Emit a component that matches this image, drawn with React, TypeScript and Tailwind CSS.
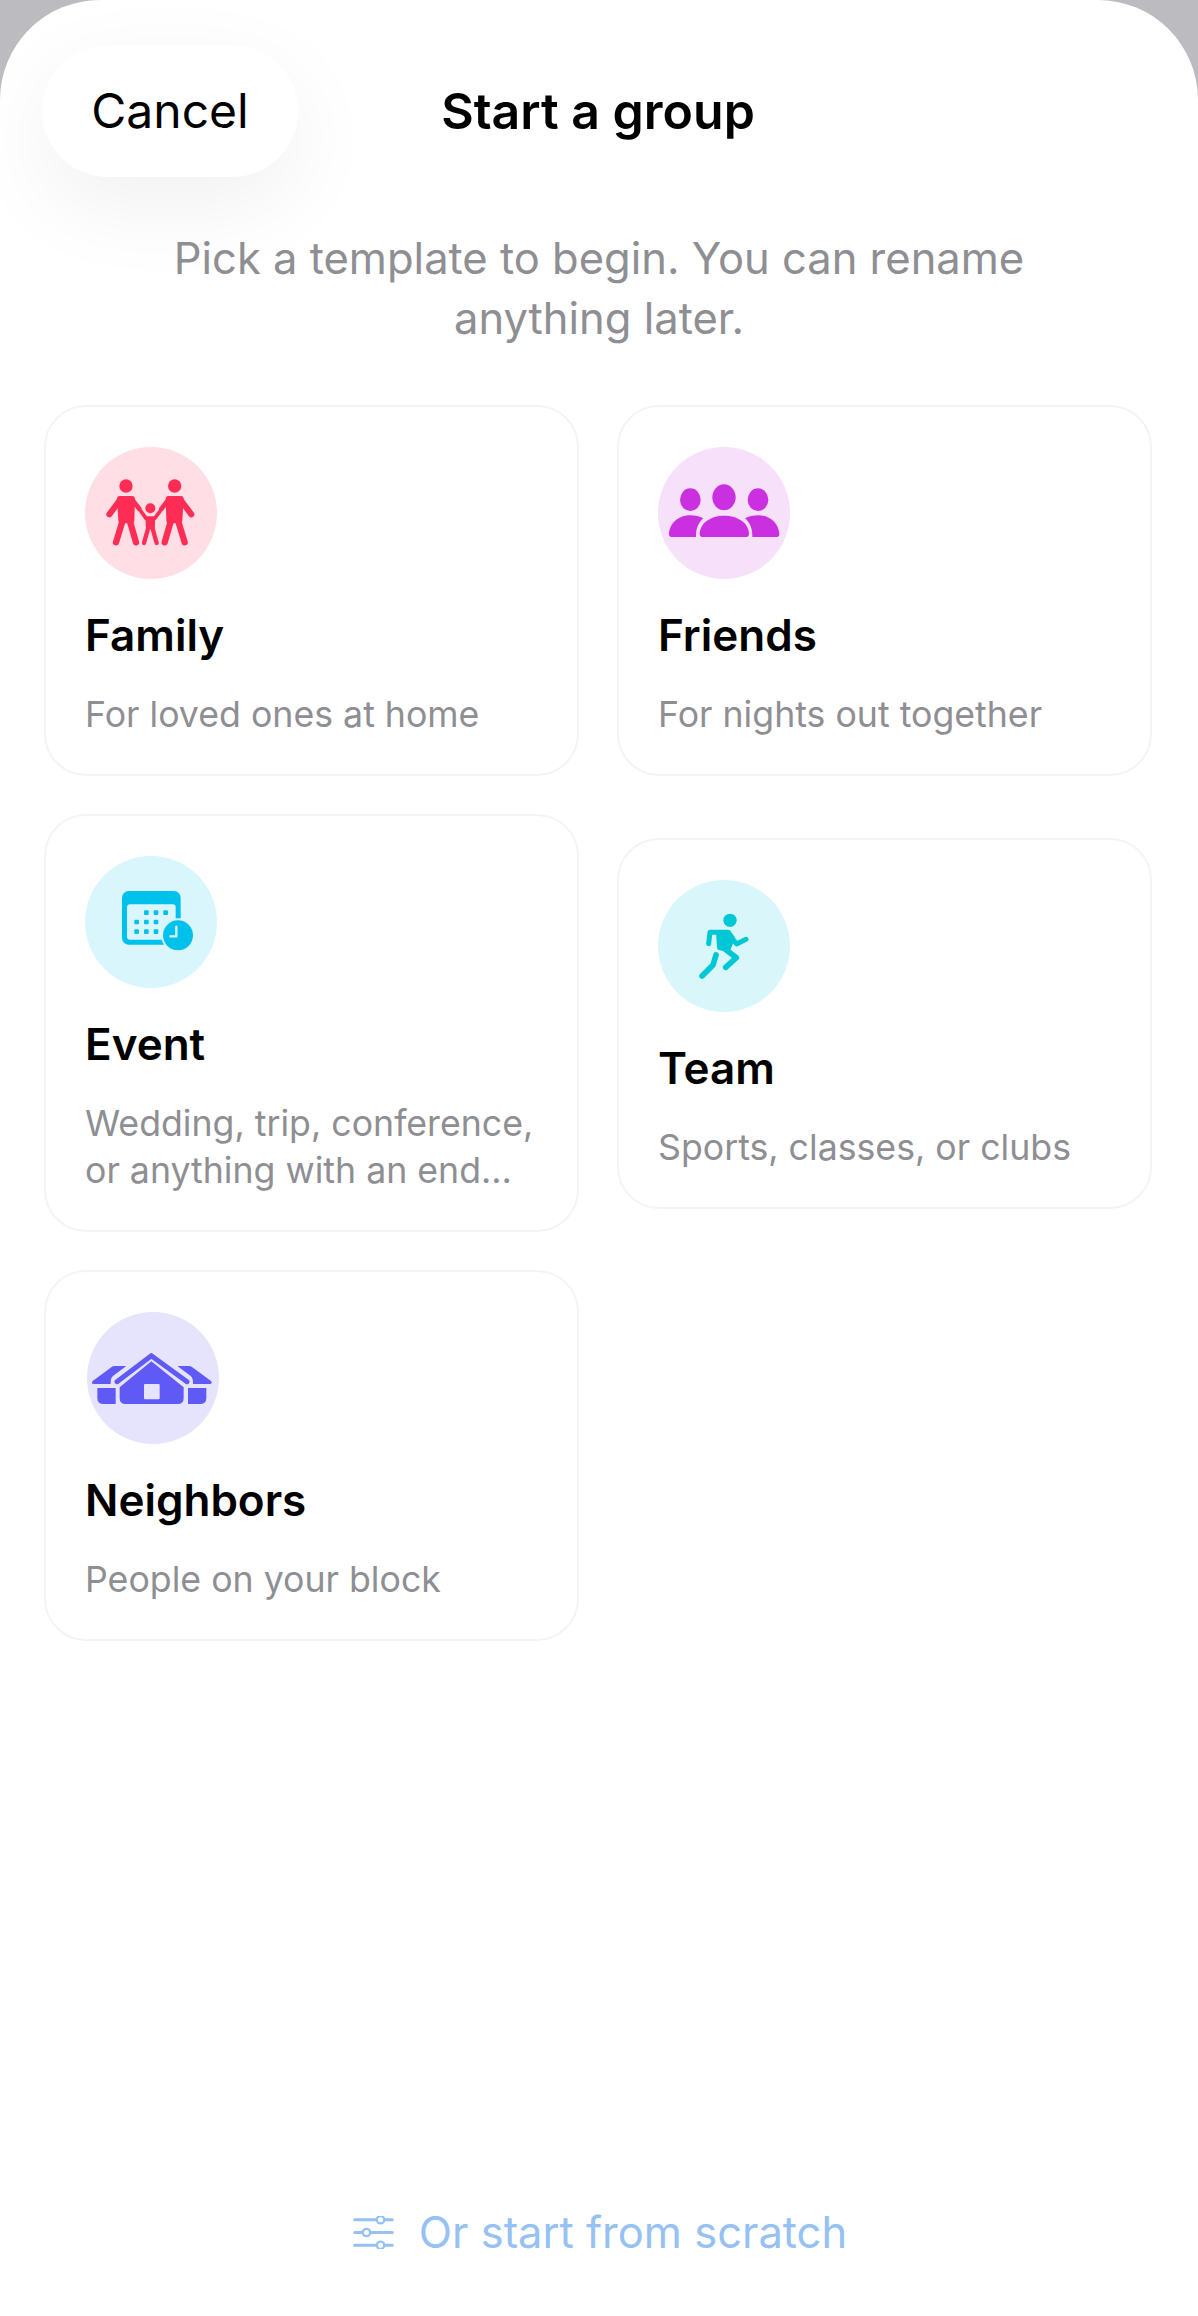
import React from "react";

const Circle = ({ bg, vb, children, shift }: { bg: string; vb: string; children: React.ReactNode; shift?: boolean }) => (
  <div className={`w-[132px] h-[132px] rounded-full shrink-0 ${bg} ${shift ? "ml-[2px]" : ""}`}>
    <svg width="132" height="132" viewBox={vb} className="block">{children}</svg>
  </div>
);

const Adult = ({ flip }: { flip?: boolean }) => (
  <g transform={flip ? "translate(422 0) scale(-1 1)" : undefined} stroke="#ff2d55" fill="#ff2d55" strokeLinecap="round" strokeLinejoin="round">
    <circle cx="138" cy="137" r="20" stroke="none" />
    <path d="M121 178 L88 222" strokeWidth="18" fill="none" />
    <path d="M155 176 L178 206" strokeWidth="14" fill="none" />
    <path d="M120 176 H156 L154 240 L124 240Z" strokeWidth="18" />
    <path d="M128 240 L108 306" strokeWidth="19" fill="none" />
    <path d="M149 240 L168 306" strokeWidth="19" fill="none" />
  </g>
);

const FamilyIcon = () => (
  <Circle bg="bg-[#ffdfe5]" vb="15 20 396 396">
    <Adult />
    <Adult flip />
    <g stroke="#ff2d55" fill="#ff2d55" strokeLinecap="round" strokeLinejoin="round">
      <circle cx="211" cy="204" r="15" stroke="none" />
      <path d="M198 234 L183 213 M224 234 L240 213" strokeWidth="11" fill="none" />
      <path d="M201 232 H221 L220 262 H202Z" strokeWidth="9" />
      <path d="M205 262 L192 308 M217 262 L230 308" strokeWidth="13" fill="none" />
    </g>
  </Circle>
);

const FriendsIcon = () => (
  <Circle bg="bg-[#f6e0fa]" vb="24 20 396 396">
    <g fill="#cb30e0">
      <ellipse cx="121" cy="178" rx="31" ry="34" />
      <ellipse cx="222" cy="171" rx="35" ry="39" />
      <ellipse cx="324" cy="178" rx="31" ry="34" />
      <path d="M149 280 C150 248 182 226 222 226 C264 226 296 248 297 280 Q297 290 287 290 H159 Q149 290 149 280Z" />
      <path d="M57 282 C58 250 85 225 120 225 C135 225 149 228 160 234 C146 246 137 265 138 290 H65 Q57 290 57 282Z" />
      <path d="M388 282 C387 250 360 225 325 225 C310 225 296 228 285 234 C299 246 308 265 307 290 H380 Q388 290 388 282Z" />
    </g>
  </Circle>
);

const EventIcon = () => {
  const dots = [
    [199, 187], [228, 187], [257, 187],
    [170, 215], [199, 215], [228, 215],
    [170, 244], [199, 244], [228, 244],
  ];
  return (
    <Circle bg="bg-[#d9f6fd]" vb="15 17 396 396">
      <rect x="126" y="122" width="176" height="161" rx="20" fill="#00c0ec" />
      <rect x="141" y="162" width="146" height="106" rx="9" fill="#d9f6fd" />
      {dots.map(([x, y]) => (
        <rect key={`${x}-${y}`} x={x - 7} y={y - 7} width="14" height="14" rx="3" fill="#00c0ec" />
      ))}
      <circle cx="294" cy="255" r="51" fill="#d9f6fd" />
      <circle cx="294" cy="255" r="45" fill="#00c0ec" />
      <path d="M289 229 V258 H271" fill="none" stroke="#d9f6fd" strokeWidth="7" strokeLinecap="round" strokeLinejoin="round" />
    </Circle>
  );
};

const TeamIcon = () => (
  <Circle bg="bg-[#d9f7fa]" vb="24 15 396 396">
    <g fill="none" stroke="#00c7d6" strokeLinecap="round" strokeLinejoin="round">
      <circle cx="240" cy="136" r="20" fill="#00c7d6" stroke="none" />
      <path d="M176 206 L180 172 H232" strokeWidth="15" />
      <path d="M205 172 H236 L248 190 L234 224 L208 218Z" fill="#00c7d6" strokeWidth="14" />
      <path d="M240 182 L260 207 L288 193" strokeWidth="15" />
      <path d="M225 222 L259 248 L227 277" strokeWidth="17" />
      <path d="M198 240 L189 270 L156 303" strokeWidth="17" />
    </g>
  </Circle>
);

const NeighborsIcon = () => (
  <Circle bg="bg-[#e6e4fd]" vb="22 24 396 396" shift>
    <g fill="#5f5af6">
      <path d="M120 250 L215 172 L312 250 V282 Q312 300 294 300 H138 Q120 300 120 282Z" />
      <path d="M39 231 L95 190 Q99 186 105 186 H140 L100 216 Q92 223 93 240 H43 Q33 240 39 231Z" />
      <path d="M394 231 L338 190 Q334 186 328 186 H293 L333 216 Q341 223 340 240 H390 Q400 240 394 231Z" />
      <path d="M53 252 H108 V300 H72 Q53 300 53 282Z" />
      <path d="M380 252 H325 V300 H361 Q380 300 380 282Z" />
    </g>
    <path d="M112 233 L215 155 L322 233" fill="none" stroke="#5f5af6" strokeWidth="15" strokeLinecap="round" strokeLinejoin="round" />
    <rect x="193" y="240" width="47" height="46" rx="3" fill="#e6e4fd" />
  </Circle>
);

const Card = ({ icon, title, desc }: { icon: React.ReactNode; title: string; desc: string }) => (
  <div className="border-2 border-[#f4f4f6] rounded-[42px] bg-white px-[39px] pt-[40px] pb-[36px]">
    {icon}
    <div className="mt-[31px] text-[44px] leading-[50px] font-semibold text-black">{title}</div>
    <div className="mt-[31px] text-[35.7px] leading-[47px] text-[#8e8e93] line-clamp-2">{desc}</div>
  </div>
);

export default function App() {
  return (
    <div className="h-[2316px] w-[1198px] bg-[#bcbcc0] font-['Inter',sans-serif] antialiased">
      <div className="h-full rounded-t-[100px] bg-white overflow-hidden flex flex-col">
        <div className="grid grid-cols-[1fr_auto_1fr] items-center pt-[45px] pl-[42px] pr-[44px]">
          <button className="justify-self-start w-[256px] h-[132px] rounded-[66px] bg-white shadow-[0_28px_90px_rgba(0,0,0,0.06)] text-[48px] text-black">
            Cancel
          </button>
          <div className="text-[50px] font-semibold text-black">Start a group</div>
          <div />
        </div>
        <p className="mt-[51px] mx-auto w-[900px] text-center text-[43.5px] leading-[60px] text-[#8e8e93]">
          Pick a template to begin. You can rename anything later.
        </p>
        <div className="mt-[57px] ml-[44px] w-[1108px] grid grid-cols-2 gap-x-[38px] gap-y-[38px] items-center">
          <Card icon={<FamilyIcon />} title="Family" desc="For loved ones at home" />
          <Card icon={<FriendsIcon />} title="Friends" desc="For nights out together" />
          <Card icon={<EventIcon />} title="Event" desc="Wedding, trip, conference, or anything with an end…" />
          <Card icon={<TeamIcon />} title="Team" desc="Sports, classes, or clubs" />
          <Card icon={<NeighborsIcon />} title="Neighbors" desc="People on your block" />
        </div>
        <div className="mt-auto pb-[58px] flex items-center justify-center gap-[23px]">
          <svg width="45" height="33" viewBox="60 78 134 98" className="block">
            <g stroke="#95c1f3" strokeWidth="9" strokeLinecap="round" fill="none">
              <path d="M71 89 H183 M71 127 H183 M71 165 H183" />
            </g>
            <g stroke="#95c1f3" strokeWidth="7" fill="#ffffff">
              <circle cx="148" cy="89" r="11" />
              <circle cx="106" cy="127" r="11" />
              <circle cx="148" cy="165" r="11" />
            </g>
          </svg>
          <span className="text-[43.5px] leading-[52px] text-[#95c1f3]">Or start from scratch</span>
        </div>
      </div>
    </div>
  );
}
